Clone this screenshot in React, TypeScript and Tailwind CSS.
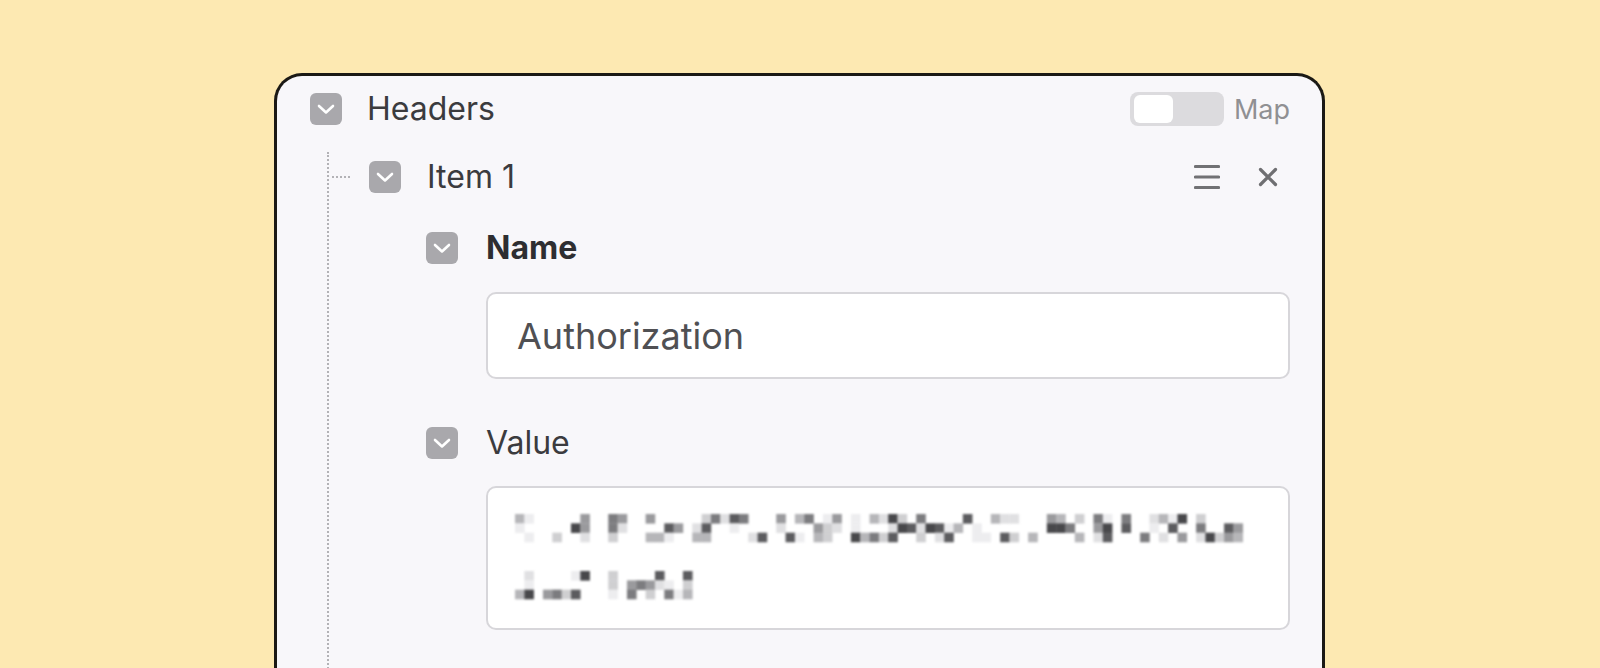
import React from 'react';

const FONT = { fontFamily: 'Inter, "Noto Sans", sans-serif' };

// blurred token: cell segments per line, in 9.33px cells
const LINE_1: [number, number][] = [
  [0, 2], [4, 8], [10, 12], [14, 27], [28, 35], [36, 41], [41, 45],
  [45, 49], [49, 54], [55, 56], [57, 61], [62, 66], [67, 72], [73, 78],
];
const LINE_2: [number, number][] = [[0, 2], [3, 9], [10, 11], [12, 14], [14, 19]];
const SHADES = ['#ededef', '#e0e0e2', '#cfcfd1', '#b6b6b9', '#9a9a9d', '#7c7c7f', '#5c5c5f', '#48484b'];

function hash(n: number) {
  const x = Math.sin(n * 127.1 + 311.7) * 43758.5453;
  return x - Math.floor(x);
}

function Mosaic() {
  const cell = 9.33;
  const rects: React.ReactNode[] = [];
  [LINE_1, LINE_2].forEach((segs, li) => {
    segs.forEach(([a, b]) => {
      for (let c = a; c < b; c++) {
        for (let r = 0; r < 3; r++) {
          const h = hash(li * 1000 + c * 7 + r * 131);
          if (h < 0.45) continue;
          const shade = SHADES[Math.floor(hash(h * 999 + c) * SHADES.length)];
          rects.push(
            <rect
              key={`${li}-${c}-${r}`}
              x={c * cell}
              y={li * 57 + r * cell}
              width={cell + 0.3}
              height={cell + 0.3}
              fill={shade}
            />
          );
        }
      }
    });
  });
  return (
    <svg width="740" height="86" viewBox="0 0 740 86" className="block" style={{ filter: 'blur(0.9px)' }}>
      {rects}
    </svg>
  );
}

function Chevron() {
  return (
    <div className="w-8 h-8 shrink-0 rounded-[6px] bg-[#a9a8ac] flex items-center justify-center">
      <svg width="32" height="32" viewBox="0 0 32 32" fill="none">
        <path d="M9 13 L16 19.5 L23 13" stroke="#fff" strokeWidth="2.6" strokeLinecap="round" strokeLinejoin="round" />
      </svg>
    </div>
  );
}

export default function App() {
  return (
    <div className="w-full h-[668px] overflow-hidden bg-[#fde9b2] pt-[73px]" style={FONT}>
      <div className="ml-[274px] w-[1051px] h-[640px] rounded-t-[28px] border-[3px] border-b-0 border-[#1b1915] bg-[#f8f7fa] pl-[33px] pr-[32px] pt-[16px]">
        {/* Headers */}
        <div className="flex items-center h-[34px]">
          <Chevron />
          <span className="ml-[25px] text-[32px] leading-none text-[#3b3b3e]">Headers</span>
          <div className="ml-auto flex items-center">
            <div className="w-[94px] h-[34px] rounded-[8px] bg-[#dcdbde] flex items-center pl-[4px]">
              <div className="w-[39px] h-[28px] rounded-[6px] bg-white" />
            </div>
            <span className="ml-[10px] text-[27px] leading-none text-[#909093]">Map</span>
          </div>
        </div>

        {/* Items tree */}
        <div className="ml-[17px] mt-[26px] h-[600px] border-l-2 border-dotted border-[#b3b2b6] pt-[9px]">
          {/* Item 1 */}
          <div className="flex items-center h-8">
            <div className="w-[18px] ml-[3px] border-t-2 border-dotted border-[#b3b2b6]" />
            <div className="ml-[19px]">
              <Chevron />
            </div>
            <span className="ml-[26px] text-[32px] leading-none text-[#3b3b3e]">Item 1</span>
            <div className="ml-auto mr-[12px] flex items-center gap-[38px]">
              <svg width="26" height="26" viewBox="0 0 26 26" fill="none">
                <path d="M1.5 2.5h23M1.5 13h23M1.5 23.5h23" stroke="#717174" strokeWidth="3.2" strokeLinecap="round" />
              </svg>
              <svg width="20" height="20" viewBox="0 0 20 20" fill="none">
                <path d="M2.5 2.5l15 15M17.5 2.5l-15 15" stroke="#6f6f72" strokeWidth="3.2" strokeLinecap="round" />
              </svg>
            </div>
          </div>

          <div className="pl-[97px]">
            {/* Name */}
            <div className="mt-[39px] flex items-center">
              <Chevron />
              <span className="ml-[28px] text-[32px] leading-none font-bold text-[#2e2e31]">Name</span>
            </div>
            <div className="ml-[60px] mt-[28px] h-[87px] rounded-[10px] border-2 border-[#d7d6da] bg-white flex items-center pl-[29px]">
              <span className="text-[36px] leading-none text-[#505053]">Authorization</span>
            </div>

            {/* Value */}
            <div className="mt-[48px] flex items-center">
              <Chevron />
              <span className="ml-[28px] text-[32px] leading-none text-[#3b3b3e]">Value</span>
            </div>
            <div className="ml-[60px] mt-[27px] h-[144px] rounded-[10px] border-2 border-[#d7d6da] bg-white pl-[27px] pt-[26px]">
              <Mosaic />
            </div>
          </div>
        </div>
      </div>
    </div>
  );
}
